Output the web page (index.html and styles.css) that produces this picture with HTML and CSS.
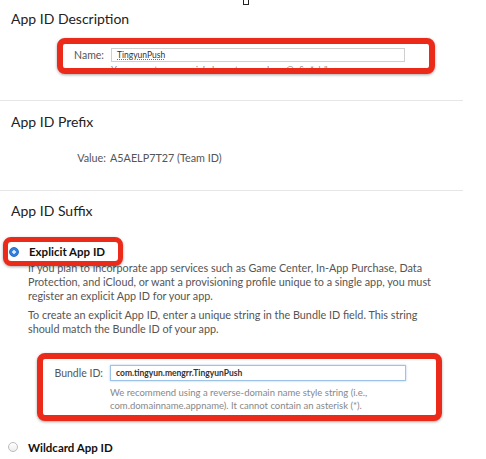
FILE: index.html
```html
<!DOCTYPE html>
<html>
<head>
<meta charset="utf-8">
<link rel="stylesheet" href="styles.css">
</head>
<body>
<div class="cursor"></div>
<section class="sec sec-desc">
  <h2 class="title">App ID Description</h2>
  <div class="mark mark-name">
    <div class="field">
      <span class="label label-name">Name:</span>
      <span class="input input-name"><span class="squiggle">TingyunPush</span></span>
    </div>
    <div class="hint hint-name">You cannot use special characters such as @, &amp;, *, ', "</div>
  </div>
</section>
<hr class="rule">
<section class="sec sec-prefix">
  <h2 class="title">App ID Prefix</h2>
  <div class="value-row"><span class="vlabel">Value:</span><span class="vtext">A5AELP7T27 (Team ID)</span></div>
</section>
<hr class="rule">
<section class="sec sec-suffix">
  <h2 class="title">App ID Suffix</h2>
  <div class="mark mark-explicit">
    <span class="radio radio-on"></span><span class="opt">Explicit App ID</span>
  </div>
  <p class="para p1">If you plan to incorporate app services such as Game Center, In-App Purchase, Data Protection, and iCloud, or want a provisioning profile unique to a single app, you must register an explicit App ID for your app.</p>
  <p class="para p2">To create an explicit App ID, enter a unique string in the Bundle ID field. This string should match the Bundle ID of your app.</p>
  <div class="mark mark-bundle">
    <div class="field">
      <span class="label label-bundle">Bundle ID:</span>
      <span class="input input-bundle">com.tingyun.mengrr.TingyunPush</span>
    </div>
    <div class="hint hint-bundle">We recommend using a reverse-domain name style string (i.e., com.domainname.appname). It cannot contain an asterisk (*).</div>
  </div>
  <div class="wild">
    <span class="radio radio-off"></span><span class="opt">Wildcard App ID</span>
  </div>
  <p class="para p3">This allows you to use a single App ID to match multiple apps. To create a wildcard App ID, enter an asterisk (*) as the last digit.</p>
</section>
</body>
</html>
```
FILE: styles.css
```css
html, body {
  margin: 0;
  padding: 0;
  background: #fff;
  overflow: hidden;
}
body {
  font-family: "Lato", "Open Sans", sans-serif;
  color: #333;
  width: 486px;
  height: 459px;
  position: relative;
}
.cursor {
  position: absolute;
  left: 243px;
  top: -2px;
  width: 4px;
  height: 5px;
  border: 1px solid #222;
  background: #fff;
}
.sec {
  margin: 0;
}
.title {
  margin: 0;
  padding-left: 11px;
  font-size: 14px;
  line-height: 18px;
  font-weight: 400;
  color: #222;
}
.sec-desc .title {
  padding-top: 10px;
}
.rule {
  margin: 0;
  border: 0;
  border-top: 1px solid #e6e6e6;
  width: 463px;
  height: 0;
}
.mark {
  border: 6px solid #eb2a1a;
  border-radius: 8px;
  box-shadow: 0 1px 3px rgba(0,0,0,0.35);
  background: #fff;
  overflow: hidden;
  position: relative;
  z-index: 1;
}
.mark-name {
  margin: 10px 0 26px 57px;
  width: 366px;
  padding-top: 4px;
  box-sizing: content-box;
  height: 20px;
}
.field {
  display: flex;
  align-items: center;
  height: 14px;
}
.label {
  text-align: right;
  font-size: 10.5px;
  color: #555;
  flex: none;
}
.label-name {
  width: 41px;
  margin-right: 7px;
}
.input {
  box-sizing: border-box;
  border: 1px solid #cfcfcf;
  background: #fff;
  display: flex;
  align-items: center;
  padding-left: 5px;
  font-size: 8.5px;
  color: #333;
}
.input-name {
  width: 294px;
  height: 14px;
}
.squiggle {
  text-decoration: underline dotted #d44;
  text-decoration-thickness: 1px;
}
.hint {
  font-size: 9.5px;
  line-height: 13px;
  color: #888;
}
.hint-name {
  margin: 1px 0 0 48px;
}
.value-row {
  margin-top: 20px;
  margin-bottom: 25px;
  display: flex;
  font-size: 10.8px;
  line-height: 14px;
  color: #555;
}
.vlabel {
  width: 106px;
  text-align: right;
  margin-right: 4px;
}
.sec-prefix .title {
  margin-top: 12px;
}
.sec-suffix .title {
  margin-top: 11px;
}
.mark-explicit {
  margin: 17px 0 -5px 3px;
  width: 110px;
  height: 19px;
  border-width: 5px;
  display: flex;
  align-items: center;
  overflow: visible;
}
.radio {
  display: inline-block;
  width: 10px;
  height: 10px;
  border-radius: 50%;
  box-sizing: border-box;
  flex: none;
}
.radio-on {
  margin-left: 1px;
  background: radial-gradient(circle, #dbe9fa 0 1.5px, #2f7fe0 2px);
  border: 1px solid #2a6cc0;
}
.radio-off {
  margin-left: 8px;
  border: 1px solid #bbb;
  background: linear-gradient(#fff, #eee);
}
.opt {
  font-weight: 700;
  font-size: 11.5px;
  color: #111;
  margin-left: 10px;
}
.para {
  margin: 0 0 0 28px;
  width: 420px;
  font-size: 10.8px;
  line-height: 14px;
  color: #555;
}
.p2 {
  margin-top: 5px;
}
.mark-bundle {
  margin: 17px 0 0 37px;
  width: 393px;
  height: 50px;
  padding-top: 6px;
}
.label-bundle {
  width: 60px;
  margin-right: 7px;
}
.mark-bundle .field {
  height: 16px;
}
.input-bundle {
  width: 296px;
  height: 16px;
  border: 1px solid #9cc3e6;
  box-shadow: 0 0 2px rgba(90,150,220,0.5);
  font-weight: 700;
  color: #333;
}
.hint-bundle {
  margin: 5px 0 0 67px;
  width: 300px;
}
.wild {
  margin-top: 19px;
  display: flex;
  align-items: center;
  height: 14px;
}
.p3 {
  margin-top: 3px;
  color: #aaa;
}
```
